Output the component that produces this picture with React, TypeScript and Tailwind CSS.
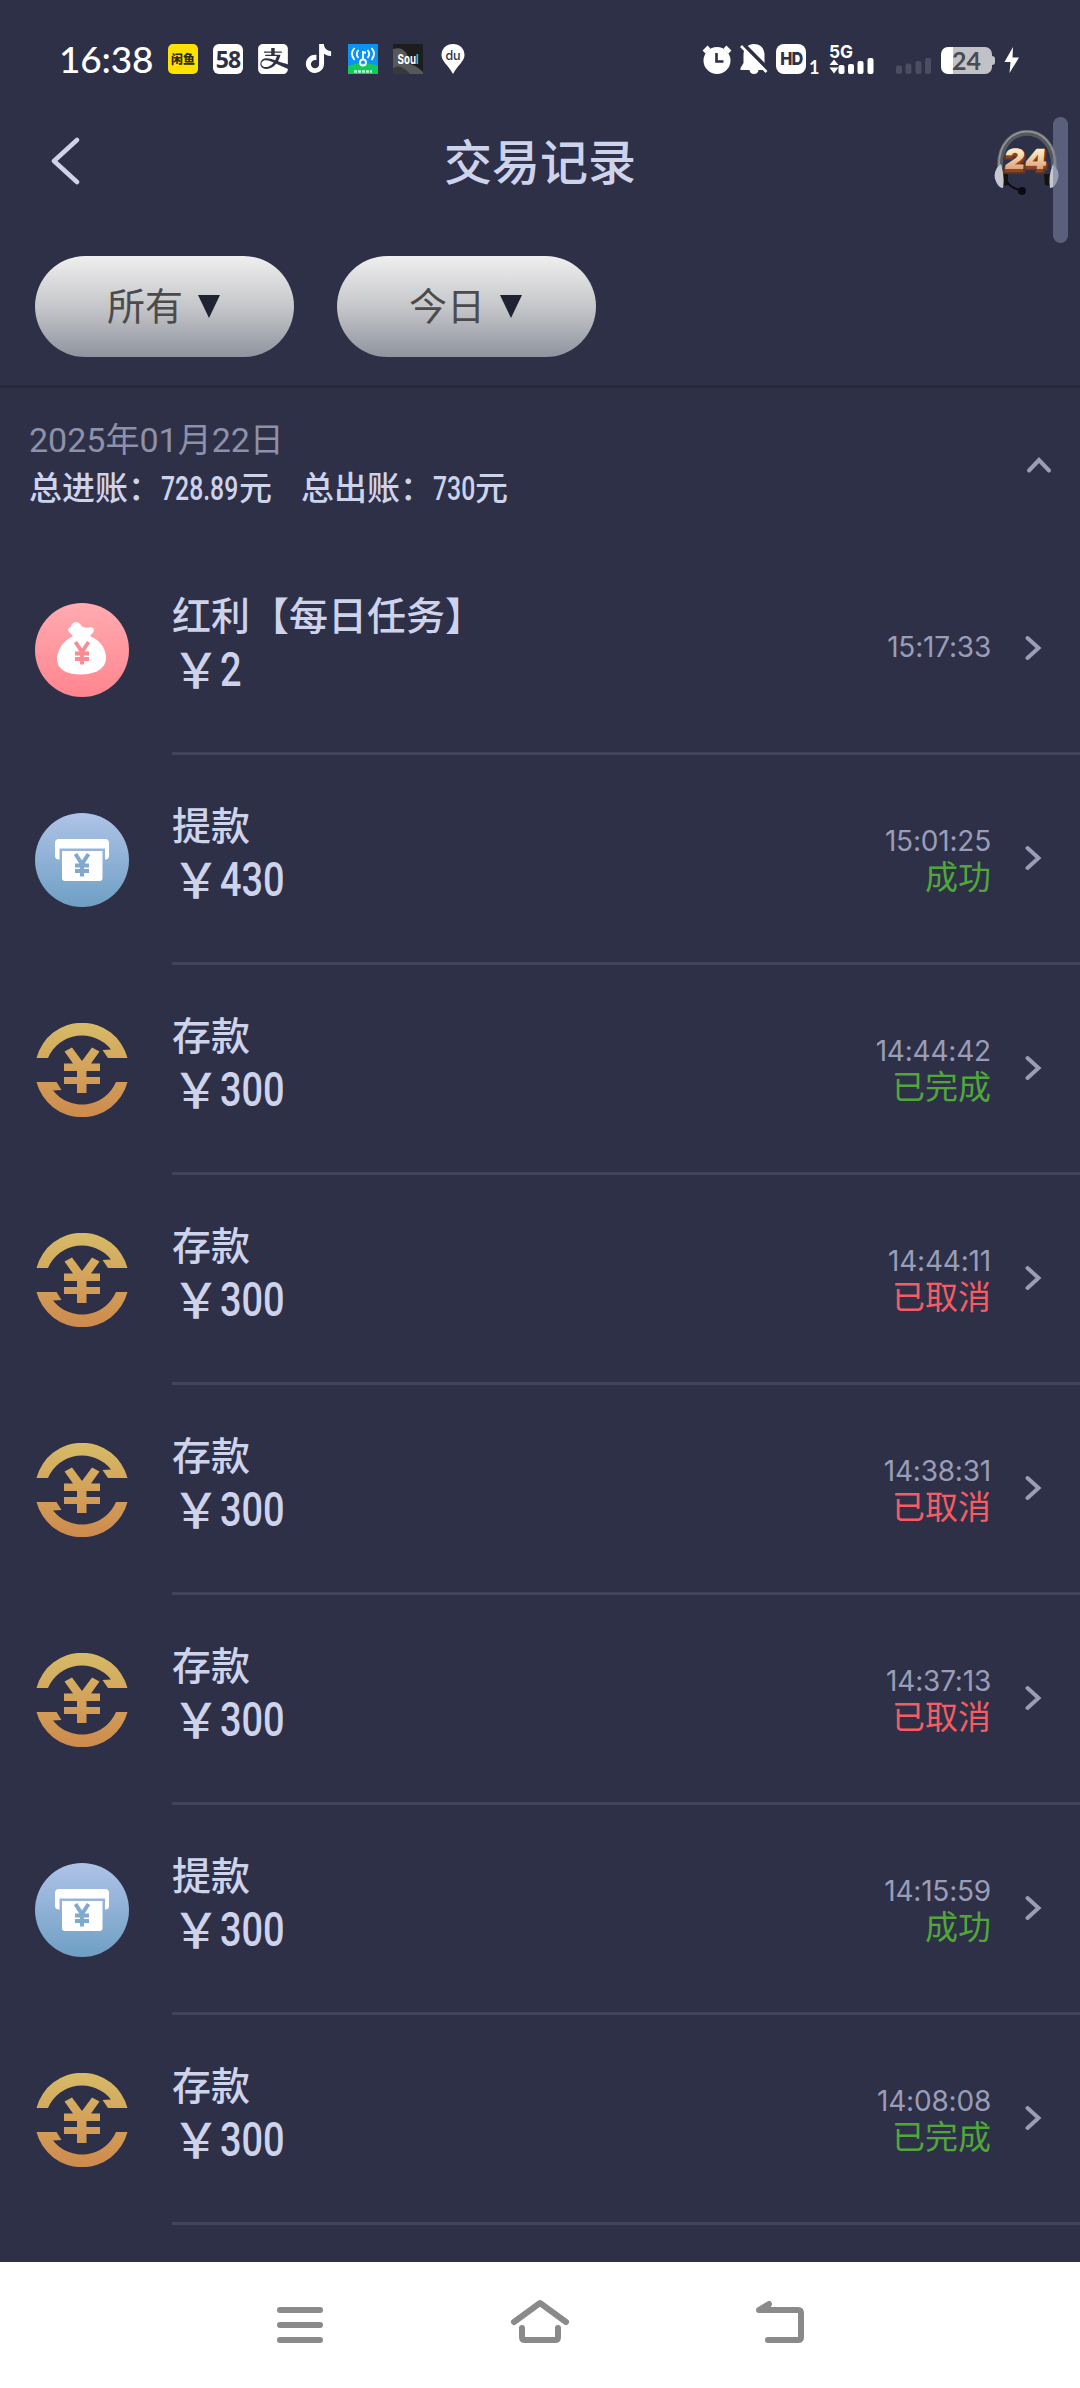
import React from "react"
import { SiAlipay, SiTiktok } from "react-icons/si"

type Kind = "bonus" | "withdraw" | "deposit"

interface Item {
  kind: Kind
  title: string
  amount: string
  time: string
  status?: string
  ok?: boolean
}

const items: Item[] = [
  { kind: "bonus", title: "红利【每日任务】", amount: "2", time: "15:17:33" },
  { kind: "withdraw", title: "提款", amount: "430", time: "15:01:25", status: "成功", ok: true },
  { kind: "deposit", title: "存款", amount: "300", time: "14:44:42", status: "已完成", ok: true },
  { kind: "deposit", title: "存款", amount: "300", time: "14:44:11", status: "已取消" },
  { kind: "deposit", title: "存款", amount: "300", time: "14:38:31", status: "已取消" },
  { kind: "deposit", title: "存款", amount: "300", time: "14:37:13", status: "已取消" },
  { kind: "withdraw", title: "提款", amount: "300", time: "14:15:59", status: "成功", ok: true },
  { kind: "deposit", title: "存款", amount: "300", time: "14:08:08", status: "已完成", ok: true },
]

function BonusIcon() {
  return (
    <svg width="94" height="94" viewBox="0 0 94 94">
      <defs>
        <linearGradient id="bonus" x1="0" y1="0" x2="0" y2="1">
          <stop offset="0" stopColor="#ffabb0" />
          <stop offset="1" stopColor="#ff858f" />
        </linearGradient>
      </defs>
      <circle cx="47" cy="47" r="47" fill="url(#bonus)" />
      <path
        d="M38 33 L33.5 28.5 Q32 25 36 24 Q37 19 41 19 Q44 19 46.5 23 Q50 26 56 24 Q60 25 58.500 29 L55 33 Q69 39 71 53 Q72 63 62 68.500 Q54 71.500 46 71.500 Q36 71.500 29 68 Q21 63 22 54 Q24 40 38 33 Z"
        fill="#fff"
      />
      <path d="M40.500 39 L47 49 L53.500 39 M47 49 V61.500 M40 50.500 H54 M40 56 H54" stroke="#fb8a93" strokeWidth="3.800" fill="none" />
    </svg>
  )
}

function WithdrawIcon() {
  return (
    <svg width="94" height="94" viewBox="0 0 94 94">
      <defs>
        <linearGradient id="withdraw" x1="0" y1="0" x2="0" y2="1">
          <stop offset="0" stopColor="#aec3e7" />
          <stop offset="1" stopColor="#6f9fc4" />
        </linearGradient>
      </defs>
      <circle cx="47" cy="47" r="47" fill="url(#withdraw)" />
      <path d="M24 26 H70 Q74 26 74 30 V43 Q74 46.500 70 46.500 V35.500 H24.500 V46.500 Q20 46.500 20 43 V30 Q20 26 24 26 Z" fill="#fff" />
      <path d="M27 38 H67.500 V65 Q67.500 68 64.500 68 H30 Q27 68 27 65 Z" fill="#fff" />
      <path d="M40.500 41 L47 51 L53.500 41 M47 51 V63.500 M40 52.500 H54 M40 58 H54" stroke="#81a9d0" strokeWidth="4" fill="none" />
    </svg>
  )
}

function DepositIcon() {
  return (
    <svg width="94" height="94" viewBox="0 0 94 94">
      <defs>
        <linearGradient id="deposit" gradientUnits="userSpaceOnUse" x1="0" y1="0" x2="0" y2="94">
          <stop offset="0" stopColor="#d6bb68" />
          <stop offset="0.5" stopColor="#d3a25a" />
          <stop offset="1" stopColor="#cd8a4d" />
        </linearGradient>
      </defs>
      <g fill="url(#deposit)">
        <path d="M1.500 35 A47 47 0 0 1 92.500 35 H73 L67.500 27 L76 26.500 A37 37 0 0 0 13 35 Z" />
        <path d="M92.500 59 A47 47 0 0 1 1.500 59 H21.500 L26.500 67 L18 67.500 A37 37 0 0 0 81 59 Z" />
        <path d="M29.500 28.500 L37 24.500 L47 38 L57 24.500 L64.500 28.500 L56 40.500 H65 V48 H51.500 V54 H65 V61 H51.500 V70 H42 V61 H29 V54 H42 V48 H29 V40.500 H38 Z" />
      </g>
    </svg>
  )
}

function HeadsetIcon() {
  return (
    <svg width="66" height="66" viewBox="0 0 66 66">
      <defs>
        <linearGradient id="gold" x1="0" y1="0" x2="0" y2="1">
          <stop offset="0.25" stopColor="#fbe9c0" />
          <stop offset="0.6" stopColor="#eebb92" />
          <stop offset="0.9" stopColor="#cf9268" />
        </linearGradient>
      </defs>
      <path d="M6 38 C4 -9 62 -9 60 38" fill="none" stroke="#55585f" strokeWidth="6" />
      <path d="M5 36 C4 -10 62 -10 61 36" fill="none" stroke="#8d9095" strokeWidth="2" />
      <path d="M8 44 L14 44 L14 55 L9 56 Z M50 44 L56 44 L57 56 L51 55 Z" fill="#15130f" />
      <path d="M7 34 Q-1 40 1 49 Q4 58 9 58 Q11 46 7 34 Z" fill="#c6c9d2" />
      <path d="M59 34 Q66 40 64 49 Q61 58 56 58 Q54 46 59 34 Z" fill="#c6c9d2" />
      <path d="M13 52 Q17 58 26 60" fill="none" stroke="#0c0c10" strokeWidth="2" />
      <circle cx="28" cy="61" r="4" fill="#0c0c10" />
      <g transform="translate(4 0) skewX(-5)" fontFamily="Inter, sans-serif" fontWeight="900" fontSize="28">
        <text x="9" y="42.500" textLength="43" lengthAdjust="spacingAndGlyphs" fill="#8a4526" stroke="#6b351d" strokeWidth="3" paintOrder="stroke">24</text>
        <text x="9" y="39.500" textLength="43" lengthAdjust="spacingAndGlyphs" fill="url(#gold)">24</text>
      </g>
    </svg>
  )
}

function StatusBar() {
  return (
    <div className="h-[100px] shrink-0 flex items-start text-white font-['Inter']">
      <div className="ml-[59px] mt-[39px] w-[109px] h-10 leading-10 text-[37px] font-medium font-['Lato'] tracking-[-0.2px]">16:38</div>
      <div className="mt-11 flex gap-[15px] h-[30px]">
        <div className="w-[30px] h-[30px] rounded-[5px] bg-[#ffe100] text-[#2b2a12] flex items-center justify-center text-[12px] leading-none font-black font-['Noto_Sans_CJK_SC']">闲鱼</div>
        <div className="w-[30px] h-[30px] rounded-[6px] bg-white text-[#2e3047] flex items-center justify-center text-[23px] leading-none font-bold font-['Open_Sans'] tracking-[-1px]">58</div>
        <SiAlipay size={30} />
        <div className="w-[30px] flex justify-center"><SiTiktok size={29} /></div>
        <svg width="30" height="30" viewBox="0 0 30 30">
          <rect width="30" height="30" fill="#0a93f5" />
          <path d="M0 22 Q15 16 30 22 V30 H0 Z" fill="#12c95c" />
          <g fill="none" stroke="#fff" strokeWidth="1.800">
            <path d="M6.500 4 Q1.500 9.500 6.500 16 M10.500 6 Q7 10 10.500 14 M23.500 4 Q28.500 9.500 23.500 16 M19.500 6 Q23 10 19.500 14" />
            <path d="M15 7 V16 M15 8.500 H18" />
            <circle cx="15" cy="18.500" r="3" />
          </g>
          <path d="M6 27.500 H24" stroke="#baf5cf" strokeWidth="2.500" strokeDasharray="3 1" />
        </svg>
        <div className="relative w-[30px] h-[30px] overflow-hidden bg-[#1d1d1f] flex items-center justify-center">
          <svg className="absolute inset-0" width="30" height="30" viewBox="0 0 30 30">
            <path d="M0 5 Q9 2 14 10 L17 20 Q24 22 30 28 V30 H0 Z" fill="#57585a" />
            <path d="M0 24 Q8 19 17 30 H0 Z" fill="#39393b" />
          </svg>
          <span className="relative scale-x-75 text-[13px] leading-none font-bold">Sou<span className="text-[#2ad1c0]">l</span></span>
        </div>
        <svg width="30" height="30" viewBox="0 0 30 30">
          <path d="M15 0 C8.500 0 3.500 4.500 3.500 11 C3.500 17 10 21 15 30 C20 21 26.500 17 26.500 11 C26.500 4.500 21.500 0 15 0 Z" fill="#fff" />
          <text x="15" y="15.500" textAnchor="middle" fontFamily="Inter, sans-serif" fontWeight="500" fontSize="12.500" fill="#2e3047">du</text>
        </svg>
      </div>

      <div className="ml-auto mr-[60px] mt-11 flex h-[30px]">
        <svg className="w-[30px] mr-2" height="30" viewBox="0 0 30 30">
          <circle cx="15" cy="16.500" r="13.500" fill="#fff" />
          <path d="M2 8 L7 3 M28 8 L23 3" stroke="#fff" strokeWidth="4" />
          <path d="M14.500 9 V17.500 H21.500" fill="none" stroke="#2e3047" strokeWidth="2.600" />
        </svg>
        <svg className="w-[28px] mr-2" height="30" viewBox="0 0 28 30">
          <path d="M14 0 C7 0 3.500 5 3.500 11 V19 L0.500 24 V26 H9.500 Q10 30 14 30 Q18 30 18.500 26 H27 V24 L24.500 19 V11 C24.500 5 21 0 14 0 Z" fill="#fff" />
          <path d="M3 0 L28 25" stroke="#2e3047" strokeWidth="4" />
          <path d="M1 2 L26.500 28" stroke="#fff" strokeWidth="2.600" />
        </svg>
        <div className="w-[30px] h-[30px] rounded-[8px] bg-white text-[#2e3047] flex items-center justify-center text-[18px] leading-none font-extrabold tracking-[-1px]"><span className="scale-x-90">HD</span></div>
        <div className="w-[20px] pl-[3px] pt-[14px] text-[18px] leading-[18px] font-bold font-['Lato']">1</div>
        <svg className="ml-[3px] mr-[21px] overflow-visible" width="46" height="30" viewBox="0 0 46 30">
          <text x="0" y="13.500" textLength="24" lengthAdjust="spacingAndGlyphs" fontFamily="Inter, sans-serif" fontWeight="700" fontSize="18" fill="#fff">5G</text>
          <path d="M0.500 21 L5 15.500 L9.500 21 Z M0.500 23.500 L5 29.500 L9.500 23.500 Z" fill="#fff" />
          <g fill="#fff">
            <rect x="9.500" y="21" width="6" height="9" rx="2" />
            <rect x="19" y="20" width="6" height="10" rx="2" />
            <rect x="28.500" y="17" width="6" height="13" rx="2" />
            <rect x="38.500" y="14" width="6" height="16" rx="2" />
          </g>
        </svg>
        <svg className="mr-[9px]" width="36" height="30" viewBox="0 0 36 30" fill="#4b4d61">
          <rect x="0" y="21.500" width="6" height="8.500" rx="2" />
          <rect x="9.500" y="19.500" width="6" height="10.500" rx="2" />
          <rect x="19.500" y="17" width="6" height="13" rx="2" />
          <rect x="29" y="14" width="6" height="16" rx="2" />
        </svg>
        <div className="mt-[3px] flex items-center h-[27px] w-[54px]">
          <div className="w-[51px] h-[27px] rounded-[7px] bg-gradient-to-r from-white from-[24%] to-[#c1c1c8] to-[24%] text-[#4b4b52] flex items-center justify-center text-[25px] leading-none font-bold font-['Lato']">24</div>
          <div className="w-[3px] h-[9px] rounded-r-full bg-[#c1c1c8]" />
        </div>
        <svg className="ml-[9px]" width="16" height="30" viewBox="0 0 16 30">
          <path d="M9 3 L0.500 18 H6.500 L5.500 29 L15 13.500 H8.500 Z" fill="#fff" />
        </svg>
      </div>
    </div>
  )
}

function Filter({ label }: { label: string }) {
  return (
    <button className="w-[259px] h-[101px] rounded-full bg-gradient-to-b from-[#efefef] via-[#c6c7ca] to-[#8f949f] flex items-center pl-[72px] text-[38px] leading-[50px] text-[#4b4b4d]">
      <span className="mb-[5px]">{label}</span>
      <svg className="ml-[15px]" width="22" height="23" viewBox="0 0 22 23">
        <path d="M0 0 H22 L11 23 Z" fill="#1f2233" />
      </svg>
    </button>
  )
}

function Row({ item }: { item: Item }) {
  return (
    <div className="h-[210px] shrink-0 flex">
      <div className="w-[172px] pl-[35px] flex items-center">
        {item.kind === "bonus" && <BonusIcon />}
        {item.kind === "withdraw" && <WithdrawIcon />}
        {item.kind === "deposit" && <DepositIcon />}
      </div>
      <div className="flex-1 flex border-b-3 border-[#42445b]">
        <div className="flex-1 pt-[44px] text-[#ced3ec] font-medium">
          <div className="h-12 leading-12 text-[39px]">{item.title}</div>
          <div className="h-[60px] leading-[60px] text-[48px] flex">
            <span className="w-12">￥</span>
            <span className="pt-[3px] origin-left scale-x-[0.79] font-['Roboto']">{item.amount}</span>
          </div>
        </div>
        <div className="flex flex-col justify-center items-end pb-1">
          <div className="h-9 leading-9 text-[28px] font-['Inter'] tracking-[-0.2px] text-[#9a9db7]">{item.time}</div>
          {item.status && (
            <div className={`h-8 leading-8 text-[33px] ${item.ok ? "text-[#51a63b]" : "text-[#f55c64]"}`}>{item.status}</div>
          )}
        </div>
        <div className="w-[89px] pl-[34px] pb-[2px] flex items-center">
          <svg width="18" height="26" viewBox="0 0 18 26" fill="none" stroke="#9a9db7" strokeWidth="4" strokeLinecap="round">
            <path d="M2.500 3 L13.500 13 L2.500 23" />
          </svg>
        </div>
      </div>
    </div>
  )
}

export default function App() {
  return (
    <div className="relative w-[1080px] h-[2388px] overflow-hidden flex flex-col bg-[#2e3047] font-['Noto_Sans_CJK_SC',sans-serif]">
      <StatusBar />

      <div className="h-[125px] shrink-0 flex items-center justify-between pl-[50px] pr-5">
        <svg className="-mt-1" width="66" height="48" viewBox="0 0 66 48" fill="none" stroke="#ced3ec" strokeWidth="4.500" strokeLinecap="round" strokeLinejoin="round">
          <path d="M27 3 L4 24 L27 45" />
        </svg>
        <h1 className="ml-[-30px] -mt-2 text-[48px] leading-[60px] font-medium text-[#ced3ec]">交易记录</h1>
        <HeadsetIcon />
      </div>
      <div className="absolute left-[1053px] top-[117px] w-[15px] h-[126px] rounded-full bg-[#7881a0]/60" />

      <div className="h-[160px] shrink-0 pt-[31px] pl-[35px] flex gap-[43px] items-start">
        <Filter label="所有" />
        <Filter label="今日" />
      </div>
      <div className="h-[3px] shrink-0 bg-[#27293c]" />

      <div className="h-[157px] shrink-0 flex justify-between pl-[29px] pr-[28px] pt-[28px]">
        <div>
          <div className="h-[46px] leading-12 text-[34px] text-[#8e91aa] font-['Roboto','Noto_Sans_CJK_SC']">2025年01月22日</div>
          <div className="h-12 leading-12 text-[33px] text-[#ced3ec] font-medium flex">
            <span>总进账：</span>
            <span className="w-[78px]"><span className="inline-block origin-left scale-x-75 font-['Roboto']">728.89</span></span>
            <span>元</span>
            <span className="ml-[29px]">总出账：</span>
            <span className="w-[42px]"><span className="inline-block origin-left scale-x-75 font-['Roboto']">730</span></span>
            <span>元</span>
          </div>
        </div>
        <svg className="mt-[38px]" width="26" height="22" viewBox="0 0 26 22" fill="none" stroke="#9a9db7" strokeWidth="4" strokeLinecap="round">
          <path d="M3 16.500 L13 6 L23 16.500" />
        </svg>
      </div>

      {items.map((item) => (
        <Row key={item.time} item={item} />
      ))}

      <div className="flex-1" />
      <div className="h-[126px] shrink-0 bg-white flex items-start justify-center pt-[36px] gap-[180px]">
        <svg width="60" height="48" viewBox="0 0 60 48" fill="none" stroke="#8a8a8a" strokeWidth="6" strokeLinecap="round">
          <path d="M10 12 H50 M10 27 H50 M10 42 H50" />
        </svg>
        <svg width="60" height="48" viewBox="0 0 60 48" fill="none" stroke="#8a8a8a" strokeWidth="6" strokeLinecap="round" strokeLinejoin="round">
          <path d="M4 24 L30 5 L56 24 M12 30 V39 Q12 42 15 42 H45 Q48 42 48 39 V30" />
        </svg>
        <svg width="60" height="48" viewBox="0 0 60 48" fill="none" stroke="#8a8a8a" strokeWidth="6" strokeLinecap="round" strokeLinejoin="round">
          <path d="M18 42 H48 Q51 42 51 39 V15 Q51 12 48 12 H9 L19 6 L17 10" />
        </svg>
      </div>
    </div>
  )
}
